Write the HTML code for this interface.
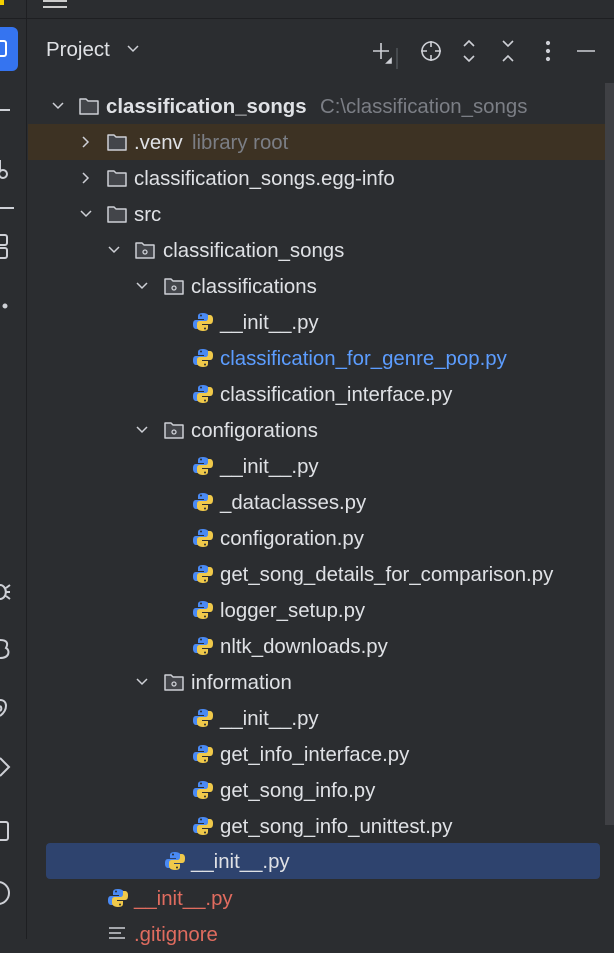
<!DOCTYPE html>
<html><head><style>
*{margin:0;padding:0;box-sizing:border-box}
body{width:614px;height:939px;background:#2b2d30;overflow:hidden;position:relative;font-family:"Liberation Sans",sans-serif;color:#dfe1e5}
.r{position:absolute;left:0;height:36px;line-height:36px;font-size:20.4px;white-space:nowrap}
.t{position:absolute;top:1px}
.ch{position:absolute;top:11px;width:14px;height:14px}
.ic{position:absolute;top:8px;width:22px;height:20px}
.g{color:#7b7e85}
</style></head><body>
<div style="position:absolute;left:0;top:0;width:27px;height:939px;background:#2b2d30;border-right:1px solid #1e1f22"></div>
<div style="position:absolute;left:0;top:18px;width:614px;height:1px;background:#1e1f22"></div>
<div style="position:absolute;left:43px;top:0;width:24px;height:2px;background:#ccc"></div>
<div style="position:absolute;left:43px;top:6px;width:24px;height:2px;background:#ccc"></div>
<div style="position:absolute;left:0;top:0;width:4px;height:5px;background:#f5d000"></div>
<div style="position:absolute;left:-10px;top:27px;width:28px;height:44px;background:#3574f0;border-radius:6px"></div>
<div style="position:absolute;left:-6px;top:40px;width:13px;height:17px;border:2px solid #fff;border-radius:3px"></div>
<svg style="position:absolute;left:0;top:90px" width="27" height="840" fill="none" stroke="#ced0d6" stroke-width="2">
<path d="M0 20 H10"/><circle cx="3" cy="84" r="4"/><path d="M0 70 V80"/>
<path d="M0 118 H14"/>
<rect x="-6" y="145" width="13" height="10" rx="2"/><rect x="-6" y="158" width="13" height="10" rx="2"/>
<circle cx="5" cy="216" r="1.5" fill="#ced0d6"/>
<path d="M0 495 a5 6 0 0 1 0 14 M6 498 l4 -3 M6 502 h4 M6 506 l4 3"/>
<path d="M0 550 c8 0 8 4 6 8 c4 2 4 10 -6 10"/>
<path d="M0 610 c8 0 8 10 0 16 M0 616 a3 3 0 0 1 0 5"/>
<path d="M0 668 l9 9 l-9 9"/>
<rect x="-6" y="732" width="14" height="18" rx="2"/>
<circle cx="-2" cy="803" r="11"/>
</svg>
<div style="position:absolute;left:46px;top:37px;font-size:20.5px;line-height:26px;color:#dfe1e5">Project</div>
<svg style="position:absolute;left:127px;top:44px" width="12" height="10" fill="none" stroke="#ced0d6" stroke-width="1.5"><path d="M1 2 l5 5 l5 -5"/></svg>
<svg style="position:absolute;left:365px;top:33px" width="240" height="36" fill="none" stroke="#ced0d6" stroke-width="1.6">
<path d="M8 18 h16 M16 10 v16"/><path d="M22 30 h4 v-4 z" fill="#ced0d6"/>
<path d="M32 15 v22" stroke="#4e5157"/>
<circle cx="66" cy="18" r="9"/><path d="M66 8 v6 M66 22 v6 M56 18 h6 M70 18 h6"/>
<path d="M99 13 l5 -5 l5 5 M99 23 l5 5 l5 -5"/>
<path d="M138 8 l5 5 l5 -5 M138 28 l5 -5 l5 5"/>
<circle cx="183" cy="10" r="1.3" fill="#ced0d6"/><circle cx="183" cy="18" r="1.3" fill="#ced0d6"/><circle cx="183" cy="26" r="1.3" fill="#ced0d6"/>
<path d="M212 18 h18"/>
</svg>
<div style="position:absolute;left:28px;top:124px;width:586px;height:36px;background:#3d3223"></div>
<div style="position:absolute;left:46px;top:843px;width:554px;height:36px;background:#2e436e;border-radius:4px"></div>
<div style="position:absolute;left:605px;top:83px;width:9px;height:742px;background:#3f4044"></div>
<svg width="0" height="0" style="position:absolute">
<defs>
<symbol id="fo" viewBox="0 0 22 20"><path d="M2 3 h6 l2 2 h10 v13 h-18 z" fill="#43454a" stroke="#ced0d6" stroke-width="1.5" stroke-linejoin="round"/></symbol>
<symbol id="fp" viewBox="0 0 22 20"><path d="M2 3 h6 l2 2 h10 v13 h-18 z" fill="#43454a" stroke="#ced0d6" stroke-width="1.5" stroke-linejoin="round"/><circle cx="11" cy="12" r="2" fill="none" stroke="#ced0d6" stroke-width="1.3"/></symbol>
<symbol id="py" viewBox="0 0 22 20"><path d="M11 1 c-5 0 -5 2 -5 4 v2 h6 v1 h-8 c-3 0 -3 3 -3 5 c0 2 1 4 3 4 h2 v-3 c0 -2 1 -3 3 -3 h5 c2 0 3 -1 3 -3 v-3 c0 -2 -2 -4 -6 -4z" fill="#4a8af4"/><path d="M11 19 c5 0 5 -2 5 -4 v-2 h-6 v-1 h8 c3 0 3 -3 3 -5 c0 -2 -1 -4 -3 -4 h-2 v3 c0 2 -1 3 -3 3 h-5 c-2 0 -3 1 -3 3 v3 c0 2 2 4 6 4z" fill="#f0c94a"/><circle cx="9" cy="3.5" r="1" fill="#2b2d30"/><circle cx="13" cy="16.5" r="1" fill="#2b2d30"/></symbol>
<symbol id="cd" viewBox="0 0 14 14"><path d="M2 4 l5 5 l5 -5" fill="none" stroke="#ced0d6" stroke-width="1.5"/></symbol>
<symbol id="cr" viewBox="0 0 14 14"><path d="M4 2 l5 5 l-5 5" fill="none" stroke="#ced0d6" stroke-width="1.5"/></symbol>
</defs></svg>

<div class="r" style="top:88px"><svg class="ch" style="left:51px"><use href="#cd"/></svg><svg class="ic" style="left:78px"><use href="#fo"/></svg><span class="t" style="left:106px;font-weight:bold;font-size:20.4px">classification_songs</span><span class="t g" style="left:320px">C:\classification_songs</span></div>
<div class="r" style="top:124px"><svg class="ch" style="left:79px"><use href="#cr"/></svg><svg class="ic" style="left:106px"><use href="#fo"/></svg><span class="t" style="left:134px">.venv</span><span class="t g" style="left:192px">library root</span></div>
<div class="r" style="top:160px"><svg class="ch" style="left:79px"><use href="#cr"/></svg><svg class="ic" style="left:106px"><use href="#fo"/></svg><span class="t" style="left:134px">classification_songs.egg-info</span></div>
<div class="r" style="top:196px"><svg class="ch" style="left:79px"><use href="#cd"/></svg><svg class="ic" style="left:106px"><use href="#fo"/></svg><span class="t" style="left:134px">src</span></div>
<div class="r" style="top:232px"><svg class="ch" style="left:107px"><use href="#cd"/></svg><svg class="ic" style="left:134px"><use href="#fp"/></svg><span class="t" style="left:163px">classification_songs</span></div>
<div class="r" style="top:268px"><svg class="ch" style="left:135px"><use href="#cd"/></svg><svg class="ic" style="left:163px"><use href="#fp"/></svg><span class="t" style="left:191px">classifications</span></div>
<div class="r" style="top:304px"><svg class="ic" style="left:192px"><use href="#py"/></svg><span class="t" style="left:220px">__init__.py</span></div>
<div class="r" style="top:340px"><svg class="ic" style="left:192px"><use href="#py"/></svg><span class="t" style="left:220px;color:#5c9dff">classification_for_genre_pop.py</span></div>
<div class="r" style="top:376px"><svg class="ic" style="left:192px"><use href="#py"/></svg><span class="t" style="left:220px">classification_interface.py</span></div>
<div class="r" style="top:412px"><svg class="ch" style="left:135px"><use href="#cd"/></svg><svg class="ic" style="left:163px"><use href="#fp"/></svg><span class="t" style="left:191px">configorations</span></div>
<div class="r" style="top:448px"><svg class="ic" style="left:192px"><use href="#py"/></svg><span class="t" style="left:220px">__init__.py</span></div>
<div class="r" style="top:484px"><svg class="ic" style="left:192px"><use href="#py"/></svg><span class="t" style="left:220px">_dataclasses.py</span></div>
<div class="r" style="top:520px"><svg class="ic" style="left:192px"><use href="#py"/></svg><span class="t" style="left:220px">configoration.py</span></div>
<div class="r" style="top:556px"><svg class="ic" style="left:192px"><use href="#py"/></svg><span class="t" style="left:220px">get_song_details_for_comparison.py</span></div>
<div class="r" style="top:592px"><svg class="ic" style="left:192px"><use href="#py"/></svg><span class="t" style="left:220px">logger_setup.py</span></div>
<div class="r" style="top:628px"><svg class="ic" style="left:192px"><use href="#py"/></svg><span class="t" style="left:220px">nltk_downloads.py</span></div>
<div class="r" style="top:664px"><svg class="ch" style="left:135px"><use href="#cd"/></svg><svg class="ic" style="left:163px"><use href="#fp"/></svg><span class="t" style="left:191px">information</span></div>
<div class="r" style="top:700px"><svg class="ic" style="left:192px"><use href="#py"/></svg><span class="t" style="left:220px">__init__.py</span></div>
<div class="r" style="top:736px"><svg class="ic" style="left:192px"><use href="#py"/></svg><span class="t" style="left:220px">get_info_interface.py</span></div>
<div class="r" style="top:772px"><svg class="ic" style="left:192px"><use href="#py"/></svg><span class="t" style="left:220px">get_song_info.py</span></div>
<div class="r" style="top:808px"><svg class="ic" style="left:192px"><use href="#py"/></svg><span class="t" style="left:220px">get_song_info_unittest.py</span></div>
<div class="r" style="top:843px"><svg class="ic" style="left:164px"><use href="#py"/></svg><span class="t" style="left:191px">__init__.py</span></div>
<div class="r" style="top:880px"><svg class="ic" style="left:107px"><use href="#py"/></svg><span class="t" style="left:134px;color:#e06c5f">__init__.py</span></div>
<div class="r" style="top:916px"><svg style="position:absolute;left:109px;top:10px" width="18" height="14" stroke="#ced0d6" stroke-width="1.5"><path d="M0 2 h16 M0 7 h12 M0 12 h16"/></svg><span class="t" style="left:134px;color:#e06c5f">.gitignore</span></div>
</body></html>
